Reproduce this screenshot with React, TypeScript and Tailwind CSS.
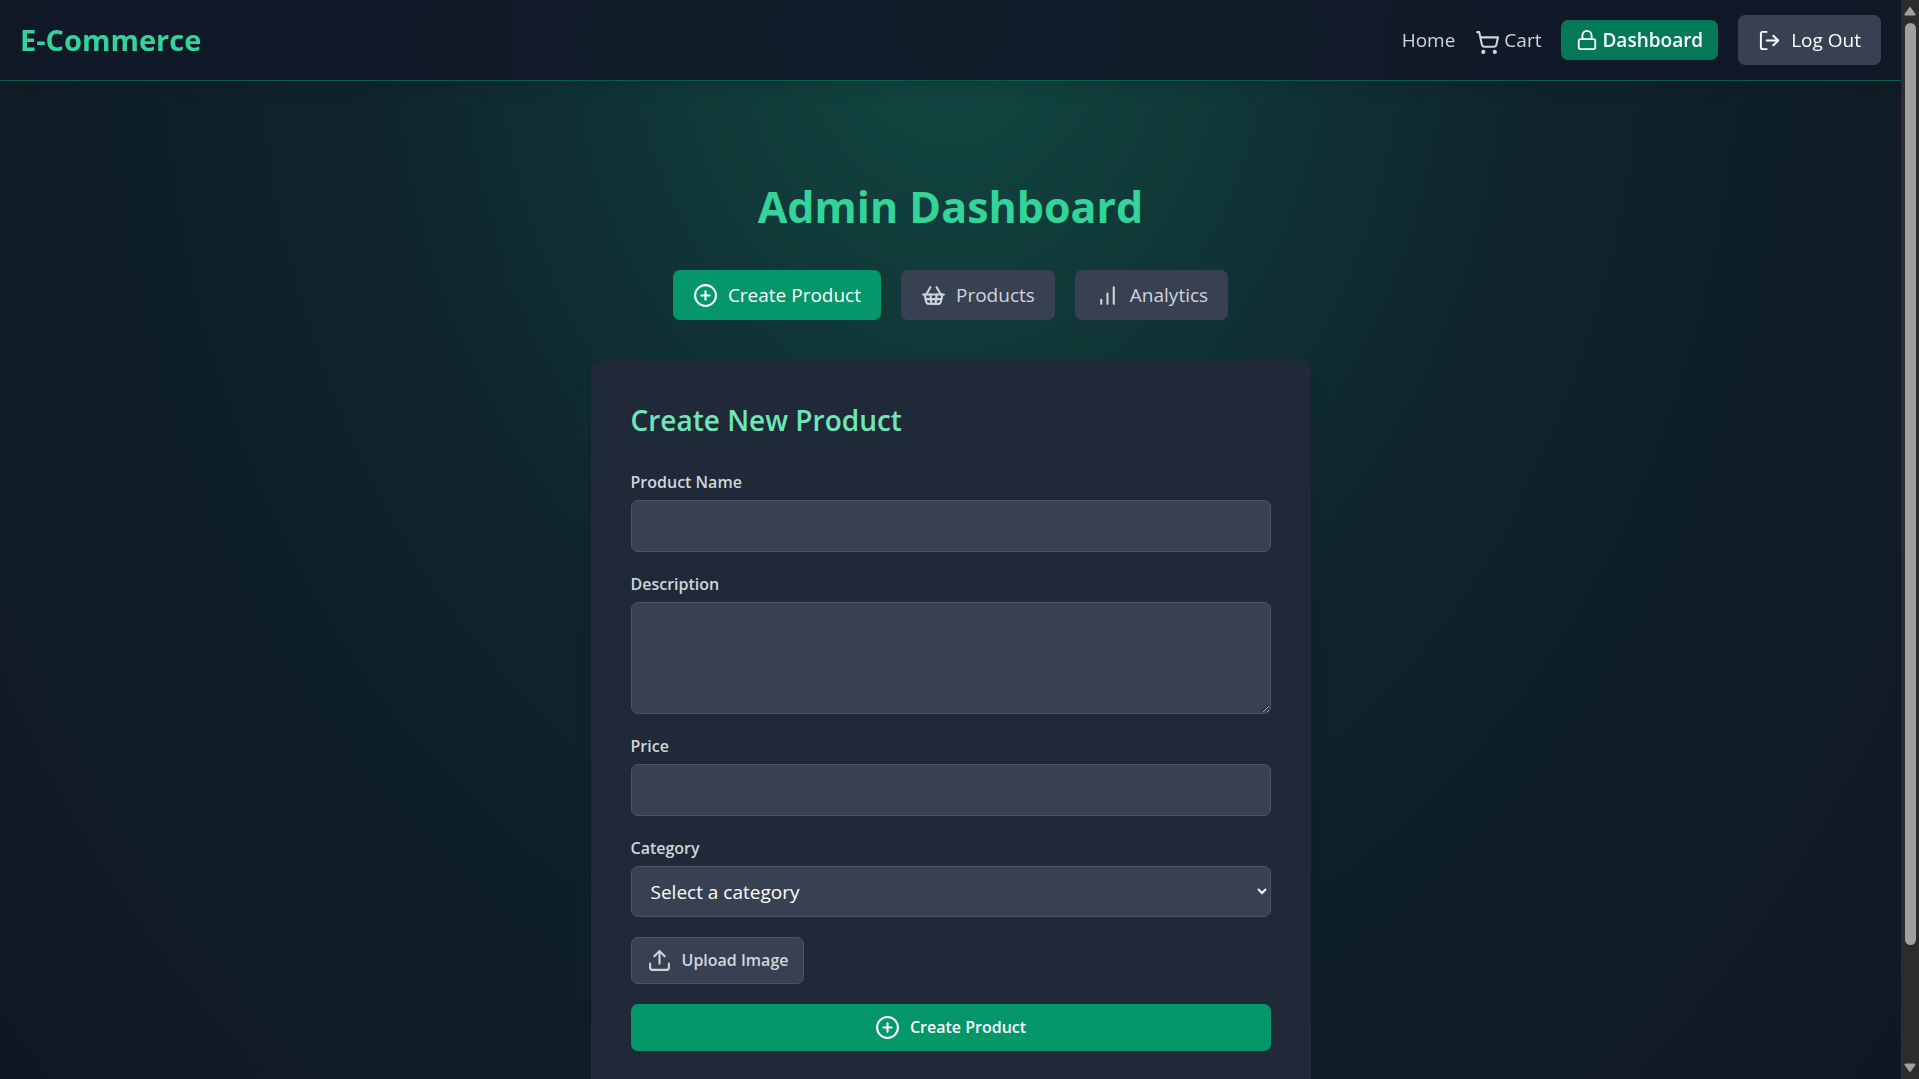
import React from "react";
import { CirclePlus, Lock, LogOut, ShoppingBasket, ShoppingCart, Upload } from "lucide-react";

const categories = ["jeans", "t-shirts", "shoes", "glasses", "jackets", "suits", "bags"];

function BarsIcon({ size = 24 }: { size?: number }) {
  return (
    <svg
      width={size}
      height={size}
      viewBox="0 0 24 24"
      fill="none"
      stroke="currentColor"
      strokeWidth="2"
      strokeLinecap="round"
      strokeLinejoin="round"
      aria-hidden="true"
    >
      <path d="M12 20V10M18 20V4M6 20v-4" />
    </svg>
  );
}

const tabs = [
  { id: "create", label: "Create Product", icon: CirclePlus },
  { id: "products", label: "Products", icon: ShoppingBasket },
  { id: "analytics", label: "Analytics", icon: BarsIcon },
];

const labelClass = "block text-[16px] leading-[25px] font-semibold text-[#d1d5db]";
const fieldClass =
  "mt-[5px] block w-full rounded-[7px] border border-[#4b5563] bg-[#374151] px-[15px] py-[10px] text-[19px] leading-[30px] text-white focus:outline-none focus:ring-2 focus:ring-emerald-500";

function Navbar() {
  return (
    <header className="sticky top-0 z-40 border-b border-[#065f46] bg-[#111827]/90 shadow-lg backdrop-blur-md">
      <div className="flex items-center justify-between px-5 py-[15px]">
        <a href="#" className="text-[29px] leading-10 font-bold text-[#34d399]">
          E-Commerce
        </a>
        <nav className="flex items-center gap-5 text-[19px] leading-[30px] text-[#d1d5db]">
          <a href="#home">Home</a>
          <a href="#cart" className="flex items-center gap-1">
            <ShoppingCart size={25} className="mt-1" />
            Cart
          </a>
          <a
            href="#dashboard"
            className="flex items-center gap-1 rounded-[7px] bg-[#047857] px-[15px] py-[5px] font-semibold text-white"
          >
            <Lock size={22} />
            Dashboard
          </a>
          <button className="flex items-center gap-[10px] rounded-[7px] bg-[#374151] px-5 py-[10px] text-white">
            <LogOut size={23} />
            Log Out
          </button>
        </nav>
      </div>
    </header>
  );
}

function CreateProductForm() {
  return (
    <section className="mx-auto w-full max-w-[720px] rounded-[10px] bg-[#1f2937] p-10 shadow-lg">
      <h2 className="mb-[30px] text-[28px] leading-10 font-semibold text-[#6ee7b7]">Create New Product</h2>
      <form className="space-y-5" onSubmit={(e) => e.preventDefault()}>
        <div>
          <label htmlFor="name" className={labelClass}>Product Name</label>
          <input id="name" type="text" className={fieldClass} />
        </div>
        <div>
          <label htmlFor="description" className={labelClass}>Description</label>
          <textarea id="description" rows={3} className={fieldClass} />
        </div>
        <div>
          <label htmlFor="price" className={labelClass}>Price</label>
          <input id="price" type="number" className={fieldClass} />
        </div>
        <div>
          <label htmlFor="category" className={labelClass}>Category</label>
          <select id="category" defaultValue="" className={fieldClass + " h-[51px]"}>
            <option value="">Select a category</option>
            {categories.map((c) => (
              <option key={c} value={c}>{c}</option>
            ))}
          </select>
        </div>
        <div className="flex">
          <input id="image" type="file" accept="image/*" className="sr-only" />
          <label
            htmlFor="image"
            className="flex cursor-pointer items-center gap-[10px] rounded-[7px] border border-[#4b5563] bg-[#374151] px-[15px] py-[10px] text-[16px] leading-[25px] font-semibold text-[#d1d5db]"
          >
            <Upload size={25} />
            Upload Image
          </label>
        </div>
        <button
          type="submit"
          className="flex w-full items-center justify-center gap-[10px] rounded-[7px] bg-[#059669] px-5 py-[11px] text-[16px] leading-[25px] font-semibold text-white"
        >
          <CirclePlus size={25} />
          Create Product
        </button>
      </form>
    </section>
  );
}

function Scrollbar() {
  return (
    <div aria-hidden="true" className="flex w-[18px] shrink-0 flex-col items-center bg-[#2c2c2c] py-[6px]">
      <svg width="12" height="10" viewBox="0 0 12 10" fill="#9f9f9f">
        <path d="M6 0.5 L11.5 8 Q12 9.5 10.5 9.5 H1.5 Q0 9.5 0.5 8 Z" />
      </svg>
      <div className="mt-[7px] w-[11px] grow-[922] basis-0 rounded-full bg-[#9f9f9f]" />
      <div className="grow-[118] basis-0" />
      <svg width="12" height="10" viewBox="0 0 12 10" fill="#9f9f9f">
        <path d="M6 9.5 L11.5 2 Q12 0.5 10.5 0.5 H1.5 Q0 0.5 0.5 2 Z" />
      </svg>
    </div>
  );
}

export default function App() {
  const [active, setActive] = React.useState("create");
  return (
    <div className="flex h-screen bg-[#111827] font-['Open_Sans','Noto_Sans',sans-serif] text-white">
      <div className="min-w-0 flex-1 overflow-y-auto [scrollbar-width:none]">
        <div className="bg-[radial-gradient(ellipse_at_top,rgba(16,185,129,0.3)_0%,rgba(10,80,60,0.2)_45%,rgba(0,0,0,0.1)_100%)]">
          <Navbar />
          <main className="px-5 pt-[101px] pb-[120px]">
            <h1 className="mb-[38px] text-center text-[43px] leading-[50px] font-bold text-[#34d399]">
              Admin Dashboard
            </h1>
            <div className="mb-10 flex justify-center gap-5">
              {tabs.map(({ id, label, icon: Icon }) => (
                <button
                  key={id}
                  onClick={() => setActive(id)}
                  className={
                    "flex items-center gap-[10px] rounded-[7px] px-5 py-[10px] text-[19px] leading-[30px] " +
                    (active === id ? "bg-[#059669] text-white" : "bg-[#374151] text-[#d1d5db]")
                  }
                >
                  <Icon size={25} />
                  {label}
                </button>
              ))}
            </div>
            <CreateProductForm />
          </main>
        </div>
      </div>
      <Scrollbar />
    </div>
  );
}
